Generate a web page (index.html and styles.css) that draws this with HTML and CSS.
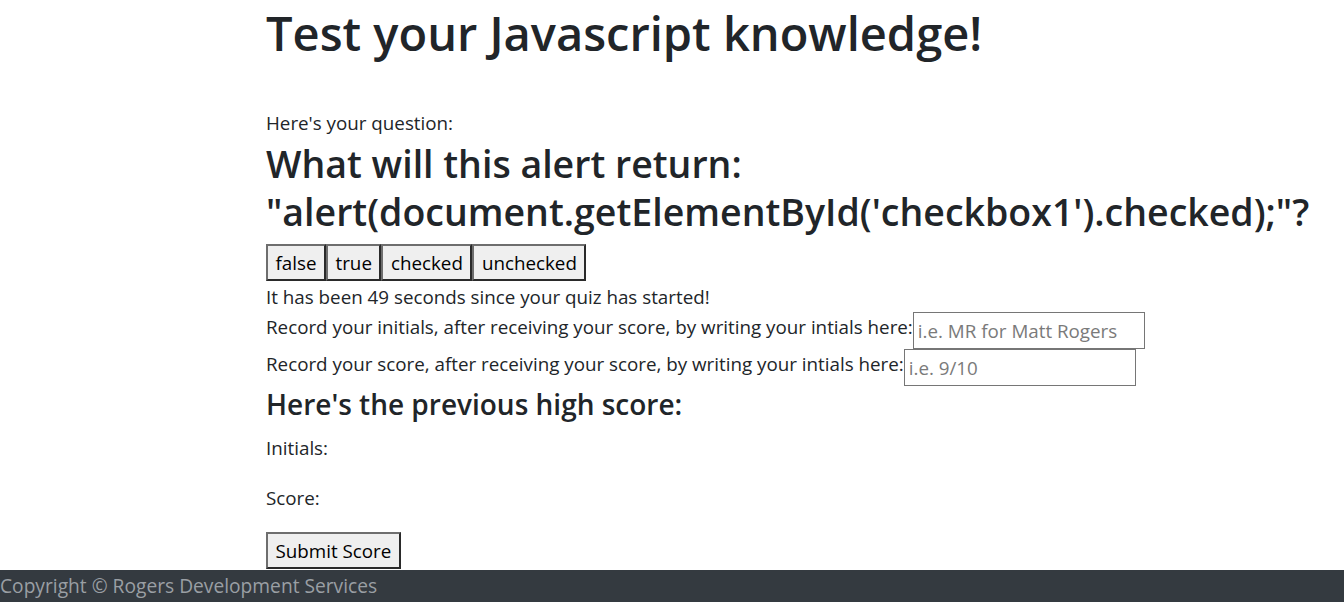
FILE: index.html
```html
<!DOCTYPE html>
<html lang="en">
<head>
<meta charset="utf-8">
<title>Javascript Quiz</title>
<link rel="stylesheet" href="styles.css">
</head>
<body>
<main class="quiz">
  <h1 class="title">Test your Javascript knowledge!</h1>
  <p class="intro">Here's your question:</p>
  <h2 class="question">What will this alert return: "alert(document.getElementById('checkbox1').checked);"?</h2>
  <div class="answers">
    <button class="btn">false</button><button class="btn">true</button><button class="btn">checked</button><button class="btn">unchecked</button>
  </div>
  <p class="timer">It has been 49 seconds since your quiz has started!</p>
  <div class="field"><span class="label">Record your initials, after receiving your score, by writing your intials here:</span><input class="entry" type="text" placeholder="i.e. MR for Matt Rogers"></div>
  <div class="field"><span class="label">Record your score, after receiving your score, by writing your intials here:</span><input class="entry" type="text" placeholder="i.e. 9/10"></div>
  <h3 class="high">Here's the previous high score:</h3>
  <p class="stat">Initials:</p>
  <p class="stat">Score:</p>
  <button class="btn submit">Submit Score</button>
</main>
<footer class="footer">Copyright © Rogers Development Services</footer>
</body>
</html>
```
FILE: styles.css
```css
* { box-sizing: border-box; }
html, body { margin: 0; padding: 0; }
body {
  font-family: "Open Sans", "Noto Sans", sans-serif;
  font-size: 18.8px;
  line-height: 28px;
  color: #212529;
  background: #fff;
  height: 602px;
  overflow: hidden;
  display: flex;
  flex-direction: column;
}
.quiz {
  padding: 5px 0 0 266px;
  flex: 1;
  min-height: 0;
  display: flex;
  flex-direction: column;
  align-items: flex-start;
}
.title {
  font-size: 47px;
  font-weight: 600;
  line-height: 56px;
  margin: 0 0 48px;
  white-space: nowrap;
}
.intro { margin: 0; }
.question {
  font-size: 37.5px;
  font-weight: 600;
  line-height: 48px;
  margin: 3px 0 8px;
}
.answers { display: flex; }
.btn {
  font-family: inherit;
  font-size: 18.8px;
  color: #000;
  background: #efefef;
  border: 2px solid;
  border-color: #6e6e6e #2a2a2a #2a2a2a #6e6e6e;
  padding: 0 7.5px;
  margin: 0;
  line-height: 28px;
  height: 37px;
}
.timer { margin: 2px 0 0; }
.field {
  display: flex;
  align-items: flex-start;
  margin-top: 1px;
  margin-bottom: -1px;
}
.label { padding-top: 1px; white-space: nowrap; }
.entry {
  font-family: inherit;
  font-size: 18.8px;
  width: 232px;
  height: 37px;
  border: 1px solid #767676;
  padding: 1px 4px 0;
  color: #495057;
  background: #fff;
}
.entry::placeholder { color: #7a7a7a; }
.high {
  font-size: 28px;
  font-weight: 600;
  line-height: 34px;
  margin: 2px 0 13px;
}
.stat { margin: 0 0 22px; }
.submit { margin-top: -2px; }
.footer {
  background: #343a40;
  color: #9a9fa4;
  font-size: 19.2px;
  height: 32px;
  flex: none;
  line-height: 32px;
  white-space: nowrap;
}
```
